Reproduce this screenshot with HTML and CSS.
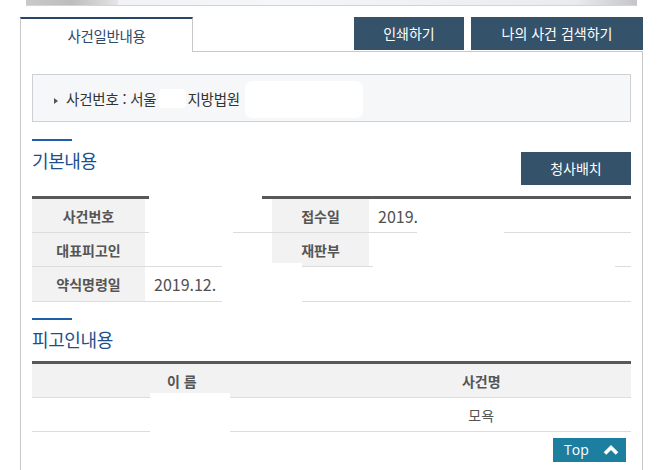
FILE: index.html
```html
<!DOCTYPE html>
<html lang="ko">
<head>
<meta charset="utf-8">
<title>사건일반내용</title>
<link rel="stylesheet" href="styles.css">
</head>
<body>
<div class="banner"><div class="banner-photo"></div></div>

<div class="tabbar">
  <div class="tab">사건일반내용</div>
  <div class="tabfill">
    <a class="btn btn-print">인쇄하기</a>
    <a class="btn btn-search">나의 사건 검색하기</a>
  </div>
</div>

<div class="panel">
  <div class="infobox">
    <span class="arrow"></span>사건번호 : 서울<span class="mask mask-s"></span>지방법원<span class="mask mask-l"></span>
  </div>

  <section class="section sec-basic">
    <div class="bar"></div>
    <div class="sec-head">
      <h2>기본내용</h2>
      <a class="btn btn-office">청사배치</a>
    </div>
    <table class="grid grid-basic">
      <colgroup><col class="c1"><col class="c2"><col class="c3"><col class="c4"></colgroup>
      <tr><th>사건번호</th><td></td><th>접수일</th><td><span class="date">2019.</span></td></tr>
      <tr><th>대표피고인</th><td></td><th>재판부</th><td></td></tr>
      <tr><th>약식명령일</th><td colspan="3"><span class="date">2019.12.</span></td></tr>
    </table>
  </section>

  <section class="section sec-def">
    <div class="bar"></div>
    <div class="sec-head">
      <h2>피고인내용</h2>
    </div>
    <table class="grid grid-def">
      <tr><th>이 름</th><th>사건명</th></tr>
      <tr><td></td><td class="center">모욕</td></tr>
    </table>
  </section>

  <div class="topwrap">
    <a class="topbtn">Top<svg class="chev" width="16" height="11" viewBox="0 0 16 11"><polyline points="2,9.5 8,3.5 14,9.5" fill="none" stroke="#ffffff" stroke-width="3.6" stroke-linejoin="miter"/></svg></a>
  </div>

  <div class="redact r1"></div>
  <div class="redact r2"></div>
  <div class="redact r3"></div>
  <div class="redact r4"></div>
  <div class="redact r5"></div>
  <div class="redact r6"></div>
</div>
</body>
</html>
```

FILE: styles.css
```css
html, body {
  margin: 0;
  padding: 0;
  background: #ffffff;
}
body {
  font-family: "Noto Sans CJK KR", "Noto Sans", sans-serif;
  color: #333333;
  font-size: 14px;
  width: 660px;
  height: 470px;
  overflow: hidden;
}

.banner {
  margin-left: 26px;
  width: 611px;
  height: 5px;
  border-bottom: 1px solid #d2d4d8;
  background: linear-gradient(to right, #eef0f3 0, #f5f6f8 40%, #e9ebef 90%, #d6d8dc 95%, #c4c5c8 100%);
  display: flex;
}
.banner-photo {
  width: 92px;
  height: 5px;
  background: linear-gradient(to right, #c9c9c9, #bdbdbd 50%, #d4d4d4 80%, #e6e6e6);
}

.tabbar {
  margin-top: 11px;
  margin-left: 20px;
  width: 623px;
  height: 35px;
  display: flex;
}
.tab {
  box-sizing: border-box;
  width: 173px;
  height: 35px;
  border-top: 2px solid #27466a;
  border-left: 1px solid #c8c8c8;
  border-right: 1px solid #c8c8c8;
  display: flex;
  align-items: center;
  justify-content: center;
  color: #2d4b6c;
  font-size: 14.5px;
  letter-spacing: -0.3px;
  padding-bottom: 1px;
}
.tabfill {
  flex: 1;
  border-bottom: 1px solid #c8c8c8;
  display: flex;
  justify-content: flex-end;
  align-items: flex-start;
  gap: 7px;
}

.btn {
  display: flex;
  align-items: center;
  justify-content: center;
  height: 33px;
  background: #35526b;
  color: #ffffff;
  font-size: 14px;
  box-sizing: border-box;
  padding-bottom: 1px;
}
.btn-print { width: 110px; }
.btn-search { width: 172px; }

.panel {
  position: relative;
  box-sizing: border-box;
  margin-left: 20px;
  width: 623px;
  border-left: 1px solid #c8c8c8;
  border-right: 1px solid #c8c8c8;
  padding: 22px 11px 20px 11px;
}

.infobox {
  box-sizing: border-box;
  height: 48px;
  border: 1px solid #cfd0d3;
  background: #f6f7f9;
  display: flex;
  align-items: center;
  padding-left: 21px;
  color: #333333;
  font-size: 14.5px;
  letter-spacing: -0.2px;
}
.arrow {
  width: 0;
  height: 0;
  border-left: 4px solid #555555;
  border-top: 3px solid transparent;
  border-bottom: 3px solid transparent;
  margin-right: 8px;
  margin-top: 5px;
}
.mask {
  display: inline-block;
  background: #ffffff;
}
.mask-s {
  width: 27px;
  height: 19px;
  border-radius: 4px;
  margin: 0 1px 0 3px;
}
.mask-l {
  width: 118px;
  height: 37px;
  border-radius: 7px;
  margin-left: 5px;
  margin-top: 2px;
}

.section { margin-top: 17px; }
.sec-def { margin-top: 16px; }
.bar {
  width: 40px;
  height: 2px;
  background: #1f5ea8;
}
.sec-head {
  display: flex;
  justify-content: space-between;
  align-items: flex-start;
  margin-bottom: 10px;
}
.sec-head h2 {
  margin: 7px 0 0 0;
  font-size: 18px;
  letter-spacing: -0.4px;
  line-height: 24px;
  font-weight: normal;
  color: #1d4f8b;
}
.btn-office {
  width: 110px;
  margin-top: 11px;
  margin-bottom: 1px;
}

.grid {
  width: 599px;
  border-collapse: collapse;
  table-layout: fixed;
  border-top: 3px solid #585858;
}
.grid th, .grid td {
  height: 33px;
  padding: 0;
  border-bottom: 1px solid #dcdcdc;
  font-size: 14px;
}
.grid th {
  background: #f2f2f2;
  color: #555555;
  font-weight: bold;
  text-align: center;
}
.grid td {
  color: #555555;
  padding-left: 9px;
}
.grid td.center {
  text-align: center;
  padding-left: 0;
}
.grid-basic tr:last-child th,
.grid-basic tr:last-child td {
  height: 34px;
}
.grid-basic .c1 { width: 113px; }
.grid-basic .c2 { width: 127px; }
.grid-basic .c3 { width: 97px; }
.grid-basic .c4 { width: 262px; }
.date {
  font-size: 16px;
  color: #505050;
}

.topwrap {
  display: flex;
  justify-content: flex-end;
  margin-top: 6px;
  padding-right: 5px;
}
.topbtn {
  display: flex;
  align-items: center;
  justify-content: space-between;
  box-sizing: border-box;
  width: 73px;
  height: 24px;
  padding: 0 7px 1px 11px;
  background: #1d7fa0;
  color: #ffffff;
  font-family: "Open Sans", "Noto Sans", sans-serif;
  font-size: 14px;
}
.chev { display: block; }

.redact {
  position: absolute;
  background: #ffffff;
}
.r1 { left: 128px; top: 141px; width: 113px; height: 7px; }
.r2 { left: 128px; top: 148px; width: 84px; height: 65px; }
.r3 { left: 201px; top: 211px; width: 80px; height: 44px; }
.r4 { left: 396px; top: 148px; width: 87px; height: 36px; }
.r5 { left: 352px; top: 188px; width: 242px; height: 30px; }
.r6 { left: 129px; top: 341px; width: 80px; height: 44px; }
```
